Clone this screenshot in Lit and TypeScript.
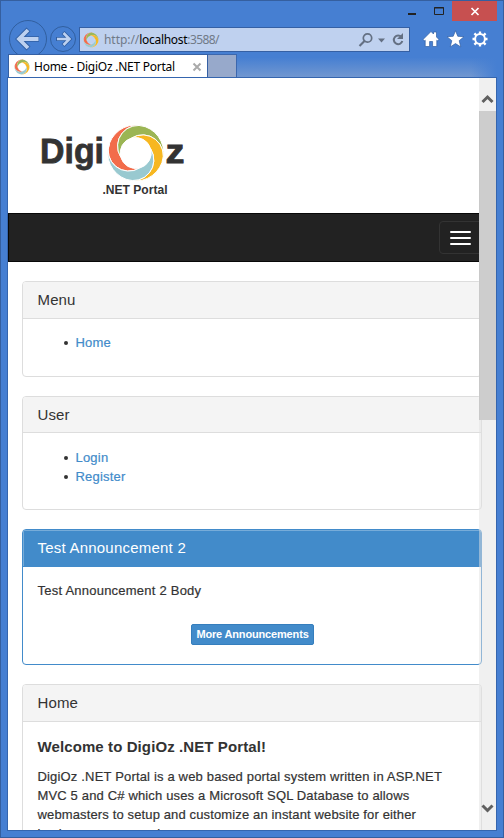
import { LitElement, html, css, svg } from "lit";
import { customElement, property } from "lit/decorators.js";

const petal = "M0-28A28 28 0 0 0-28 0A20.64 20.64 0 0 0 8.9 12.7A15.5 15.5 0 0 1-12.7 8.9A20.64 20.64 0 0 1 0-28Z";
const swirl = (stroke: number) => svg`<g stroke="#fff" stroke-width=${stroke}>
  <path d=${petal} fill="#f26c4b" transform="rotate(20)"/>
  <path d=${petal} fill="#9bb554" transform="rotate(110)"/>
  <path d=${petal} fill="#f7b720" transform="rotate(200)"/>
  <path d=${petal} fill="#99c9d0" transform="rotate(290)"/>
</g>`;

@customElement("swirl-icon")
class SwirlIcon extends LitElement {
  static styles = css`:host { display: block; width: 16px; height: 16px; } svg { display: block; }`;
  render() {
    return html`<svg width="16" height="16" viewBox="-30 -30 60 60">${swirl(0.3)}</svg>`;
  }
}

@customElement("portal-panel")
class PortalPanel extends LitElement {
  @property() heading = "";
  @property({ type: Boolean, reflect: true }) primary = false;
  static styles = css`
    :host { display: flex; flex-direction: column; box-sizing: border-box; flex: none; width: 460px;
      border: 1px solid #ddd; border-radius: 4px; margin-bottom: 19px; background: #fff; overflow: hidden; }
    .head { box-sizing: border-box; height: var(--head, 37px); flex: none; border-bottom: 1px solid #ddd; background: #f4f4f4;
      padding: 0 14.5px; font-size: 15px; line-height: 36px; letter-spacing: .14px; }
    .body { padding: var(--body-top, 14px) 14.5px 14px; -webkit-text-stroke: .2px currentColor; }
    :host([primary]) { border-color: #428bca; }
    :host([primary]) .head { background: #428bca; color: #fff; border-color: #428bca; box-shadow: inset 1px 1px #77acd9; letter-spacing: .22px; }
  `;
  render() {
    return html`<div class="head">${this.heading}</div><div class="body"><slot></slot></div>`;
  }
}

@customElement("app-root")
class AppRoot extends LitElement {
  static styles = css`
    :host { display: block; width: 504px; height: 838px; }
    * { box-sizing: border-box; }
    svg { display: block; }
    .window { width: 504px; height: 838px; border: 1px solid #355f9f; background: #467fd2; padding: 0 6px; display: flex; flex-direction: column; overflow: hidden; }
    .chrome { height: 76px; flex: none; position: relative; display: flex; flex-direction: column; font: 12px "Noto Sans", "Open Sans", sans-serif; }
    .captions { height: 20px; display: flex; justify-content: flex-end; }
    .tools { height: 33px; display: flex; margin-left: 1px; }
    .nav { width: 71px; flex: none; overflow: visible; margin-top: -2px; }
    .address { margin-top: 6px; width: 331px; height: 25px; flex: none; border: 1px solid #3560a4; background: #bfd1ef; display: flex; align-items: center; padding-left: 3px; color: #707a88; white-space: pre; }
    .url { flex: 1; margin-left: 5px; letter-spacing: -.05px; }
    .url b { font-weight: 400; color: #000; letter-spacing: -.3px; }
    .url .port { letter-spacing: -.6px; }
    .actions { margin: 7px 0 0 11px; }
    .tabs { height: 23px; display: flex; margin-left: 1px; background: linear-gradient(#467fd2 15%, #7197d0); }
    .tab { width: 200px; height: 24px; background: #fff; border: 1px solid #3560a4; border-bottom: 0; display: flex; align-items: center; padding: 0 5px; color: #000; white-space: pre; position: relative; }
    .tab .title { flex: 1; margin-left: 4px; letter-spacing: -.25px; }
    .newtab { width: 29px; height: 23px; background: #97a9cb; border: 1px solid #3b67ae; border-left: 0; border-bottom: 0; }
    .fade { flex: 1; background: linear-gradient(90deg, transparent 90%, #467fd2); }
    .page { height: 754px; width: 490px; flex: none; border: 1px solid #3565ae; background: #fff; position: relative; overflow: hidden;
      font: 13px/19px "Liberation Sans", Arial, sans-serif; color: #333; display: flex; flex-direction: column; }
    .banner { height: 135px; flex: none; }
    .navbar { height: 49px; flex: none; background: #222; border: 1px solid #080808; display: flex; justify-content: flex-end; align-items: center; }
    .toggle { width: 44px; height: 33px; border: 1px solid #333; border-radius: 4px; margin-right: 12px; padding-right: 2px; display: flex; flex-direction: column; gap: 4px; align-items: center; justify-content: center; }
    .toggle i { width: 21px; height: 2px; background: #fff; border-radius: 1px; }
    .content { padding: 19px 0 0 14px; display: flex; flex-direction: column; }
    ul { margin: 0; padding: 0 0 0 38px; list-style: none; color: #428bca; letter-spacing: .2px; }
    li { display: flex; align-items: center; }
    li::before { content: ""; width: 4px; height: 4px; border-radius: 2px; background: #333; margin: 0 8px 0 -12px; }
    .menu { height: 96px; }
    .user { height: 114px; --head: 36px; --body-top: 15px; }
    .news { height: 136px; }
    .home { height: 300px; }
    .line { margin: 0; letter-spacing: .23px; white-space: nowrap; }
    .l1 { letter-spacing: .17px; }
    .l2 { letter-spacing: .155px; }
    .l3 { letter-spacing: .135px; }
    .more { display: flex; width: 123px; height: 21px; margin: 24px 0 0 153.5px; border: 1px solid #357ebd; border-radius: 2px; background: #428bca; color: #fff; font-size: 11px; font-weight: 700; line-height: 19px; justify-content: center; white-space: nowrap; letter-spacing: -.16px; -webkit-text-stroke: 0; }
    h3 { margin: 2px 0 11px; font-size: 15px; line-height: 18px; letter-spacing: .1px; white-space: nowrap; -webkit-text-stroke: 0; }
    .scroll { position: absolute; right: 0; top: 0; width: 17px; height: 752px; background: rgba(225,225,225,.5); display: flex; flex-direction: column; justify-content: space-between; }
    .thumb { height: 309px; flex: none; background: #cdcdcd; border-left: 1px solid #c9c9c9; }
    .arrow { height: 33px; flex: none; }
    .spacer { flex: 1; }
  `;
  render() {
    return html`<div class="window">
      <div class="chrome">
        <div class="captions"><svg width="100" height="20">
          <path d="M11 13h8" stroke="#222" stroke-width="2"/>
          <path d="M37.500 6.500h9v7h-9zM37 7h10" fill="none" stroke="#222"/>
          <path d="M55 0h45v20h-45z" fill="#c75050"/>
          <path d="M74.500 7l7 7M81.500 7l-7 7" fill="none" stroke="#fff" stroke-width="1.700"/>
        </svg></div>
        <div class="tools">
          <svg class="nav" width="71" height="35">
            <g fill="#467fd2" stroke="#315f9f"><circle cx="20" cy="20" r="18.500"/><circle cx="55" cy="20" r="12.500"/></g>
            <g fill="none"><path d="M31 20H12M20.500 10.500L11 20l9.500 9.500" stroke="#305fa3" stroke-width="5.600"/><path d="M30.500 20H12M20 11l-9 9 9 9" stroke="#bdd1f0" stroke-width="3.800"/>
            <path d="M48 20h13M55 13.500l6.500 6.500-6.500 6.500" stroke="#305fa3" stroke-width="4.200"/><path d="M49 20h12M55.500 14l6 6-6 6" stroke="#bdd1f0" stroke-width="2.500"/></g>
          </svg>
          <div class="address"><swirl-icon></swirl-icon><span class="url">http://<b>localhost</b><span class="port">:3588/</span></span>
            <svg width="52" height="23" fill="none" stroke="#647083">
              <circle cx="10.500" cy="10" r="4.200" stroke-width="1.700"/><path d="M7.500 13L2.500 18" stroke-width="2.200"/>
              <path d="M21 10.500h7l-3.500 4z" fill="#647083" stroke="none"/>
              <path d="M44.500 9.200A4.300 4.300 0 1 0 45.300 13" stroke-width="2"/><path d="M46 5v6h-6z" fill="#647083" stroke="none"/>
            </svg>
          </div>
          <svg class="actions" width="70" height="24" fill="#fff" stroke="#315fa3" stroke-width=".7">
            <path d="M2 11.500L10 3.500l2.500 2.500V4h3v5L18 11.500l-1.500 1.300-.7-.6V18.500H11.600v-5H8.600v5H4.200v-6.300l-.7.6z"/>
            <path d="M34.500 2.700l2.300 5.600 6.200.4-4.800 4 1.600 6.200-5.300-3.300-5.300 3.300 1.600-6.200-4.800-4 6.200-.4z"/>
            <g transform="translate(59 11)" fill="none" stroke="#fff"><circle r="4.900" stroke-width="2"/><path d="M0-7.500v2.500M0 5v2.500M-7.500 0h2.500M5 0h2.500M-5.600-5.600l2 2M5.600-5.600l-2 2M-5.600 5.600l2-2M5.600 5.600l-2-2" stroke-width="2.300"/></g>
          </svg>
        </div>
        <div class="tabs">
          <div class="tab"><swirl-icon></swirl-icon><span class="title">Home - DigiOz .NET Portal</span>
            <svg width="10" height="10"><path d="M1.500 1.500l7 7M8.500 1.500l-7 7" stroke="#aaa" stroke-width="2"/></svg></div>
          <div class="newtab"></div><div class="fade"></div>
        </div>
      </div>
      <div class="page">
        <div class="banner"><svg width="220" height="135" fill="#333" font-family="Liberation Sans, Arial, sans-serif" font-weight="700">
          <text x="32" y="85" font-size="35.500" textLength="64" lengthAdjust="spacingAndGlyphs" stroke="#333" stroke-width=".8">Digi</text>
          <text x="157.500" y="85" font-size="34" textLength="19" lengthAdjust="spacingAndGlyphs" stroke="#333" stroke-width=".8">z</text>
          <g transform="translate(127.700 75)">${swirl(0.9)}</g>
          <text x="94.500" y="116" font-size="12" textLength="65" lengthAdjust="spacingAndGlyphs">.NET Portal</text>
        </svg></div>
        <div class="navbar"><div class="toggle"><i></i><i></i><i></i></div></div>
        <div class="content">
          <portal-panel class="menu" heading="Menu"><ul><li>Home</li></ul></portal-panel>
          <portal-panel class="user" heading="User"><ul><li>Login</li><li>Register</li></ul></portal-panel>
          <portal-panel class="news" heading="Test Announcement 2" primary><p class="line">Test Announcement 2 Body</p><span class="more">More Announcements</span></portal-panel>
          <portal-panel class="home" heading="Home"><h3>Welcome to DigiOz .NET Portal!</h3>
            <p class="line"><span class="l1">DigiOz .NET Portal is a web based portal system written in ASP.NET</span><br><span class="l2">MVC 5 and C# which uses a Microsoft SQL Database to allows</span><br><span class="l3">webmasters to setup and customize an instant website for either</span><br><span class="l3">business or personal use.</span></p></portal-panel>
        </div>
        <div class="scroll">
          <svg class="arrow" width="17" height="33"><path d="M3.500 24l5-5 5 5" fill="none" stroke="#606060" stroke-width="3"/></svg>
          <div class="thumb"></div><div class="spacer"></div>
          <svg class="arrow" width="17" height="33"><path d="M3.500 8.500l5 5 5-5" fill="none" stroke="#606060" stroke-width="3"/></svg>
        </div>
      </div>
    </div>`;
  }
}
